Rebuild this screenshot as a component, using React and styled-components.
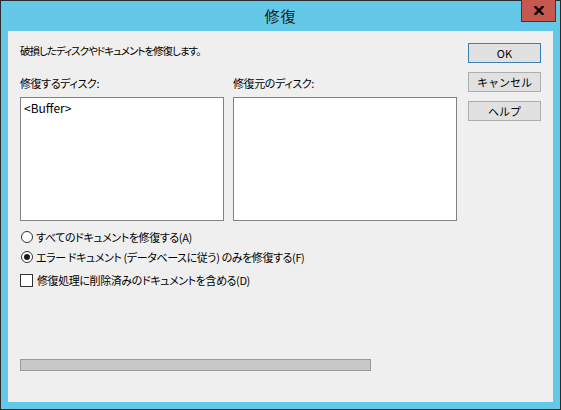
import styled, { createGlobalStyle } from "styled-components";

const GlobalStyle = createGlobalStyle`
  html, body {
    margin: 0;
    padding: 0;
    background: #ffffff;
  }
  * {
    box-sizing: border-box;
  }
`;

const fontStack = `"Segoe UI", "Noto Sans CJK JP", "Noto Sans", sans-serif`;

const App = () => {
  return (
    <Window>
      <GlobalStyle />
      <TitleBar>
        <span />
        <Title>修復</Title>
        <CloseButton aria-label="閉じる">
          <svg width="10" height="9" viewBox="0 0 10 9">
            <path d="M1.5 1 L8.5 8 M8.5 1 L1.5 8" stroke="#000" strokeWidth="2.4" strokeLinecap="square" />
          </svg>
        </CloseButton>
      </TitleBar>
      <Client>
        <TopRow>
          <MainColumn>
            <Intro>破損したディスクやドキュメントを修復します。</Intro>
            <ListGrid>
              <Label>修復するディスク:</Label>
              <Label>修復元のディスク:</Label>
              <ListBox>
                <ListItem>&lt;Buffer&gt;</ListItem>
              </ListBox>
              <ListBox />
            </ListGrid>
            <Options>
              <OptionRow>
                <Radio />
                <OptionText>すべてのドキュメントを修復する(A)</OptionText>
              </OptionRow>
              <OptionRow $gap={4}>
                <Radio $checked />
                <OptionText>エラー ドキュメント (データベースに従う) のみを修復する(F)</OptionText>
              </OptionRow>
              <OptionRow $gap={7}>
                <CheckBox />
                <OptionText>修復処理に削除済みのドキュメントを含める(D)</OptionText>
              </OptionRow>
            </Options>
          </MainColumn>
          <ButtonColumn>
            <Button $default>OK</Button>
            <Button>キャンセル</Button>
            <Button>ヘルプ</Button>
          </ButtonColumn>
        </TopRow>
        <Progress />
      </Client>
    </Window>
  );
};

export default App;

const Window = styled.div`
  width: 561px;
  height: 410px;
  border: 1px solid #2b2b2b;
  background: #64c8e8;
  display: flex;
  flex-direction: column;
  font-family: ${fontStack};
  font-feature-settings: "palt";
  color: #000;
`;

const TitleBar = styled.div`
  height: 30px;
  display: grid;
  grid-template-columns: 1fr auto 1fr;
  align-items: start;
`;

const Title = styled.div`
  font-size: 15px;
  line-height: 30px;
  color: #1a1a1a;
  letter-spacing: 1px;
`;

const CloseButton = styled.div`
  justify-self: end;
  margin-top: -1px;
  margin-right: 4px;
  width: 35px;
  height: 22px;
  background: #c75850;
  border: 1px solid #48332f;
  border-top: none;
  display: flex;
  align-items: center;
  justify-content: center;
  padding-bottom: 1px;
`;

const Client = styled.div`
  flex: 1;
  margin: 0 7px 7px;
  background: #efefef;
  padding: 12px 12px 31px;
  display: flex;
  flex-direction: column;
`;

const TopRow = styled.div`
  display: flex;
  gap: 11px;
`;

const MainColumn = styled.div`
  width: 437px;
  display: flex;
  flex-direction: column;
`;

const Intro = styled.div`
  font-size: 10.5px;
  line-height: 16px;
  letter-spacing: -1px;
`;

const ListGrid = styled.div`
  margin-top: 16px;
  display: grid;
  grid-template-columns: 204px 224px;
  column-gap: 9px;
  row-gap: 6px;
`;

const Label = styled.div`
  font-size: 11px;
  line-height: 16px;
  letter-spacing: -0.4px;
`;

const ListBox = styled.div`
  height: 124px;
  background: #ffffff;
  border: 1px solid #828282;
  padding: 3px 3px;
`;

const ListItem = styled.div`
  font-size: 12px;
  line-height: 14px;
`;

const Options = styled.div`
  margin-top: 8px;
  display: flex;
  flex-direction: column;
`;

const OptionRow = styled.div`
  display: flex;
  align-items: center;
  gap: 3px;
  height: 16px;
  margin-top: ${({ $gap }) => ($gap ? `${$gap}px` : "0")};
`;

const OptionText = styled.span`
  font-size: 11px;
  line-height: 16px;
  letter-spacing: -0.4px;
  white-space: nowrap;
`;

const Radio = styled.span`
  width: 12px;
  height: 12px;
  margin-left: 1px;
  border-radius: 50%;
  border: 1px solid #333333;
  background: #ffffff;
  display: flex;
  align-items: center;
  justify-content: center;
  &::after {
    content: "";
    width: 6px;
    height: 6px;
    border-radius: 50%;
    background: ${({ $checked }) => ($checked ? "#1a1a1a" : "transparent")};
  }
`;

const CheckBox = styled.span`
  width: 13px;
  height: 13px;
  border: 1px solid #333333;
  background: #ffffff;
  margin-right: 1px;
`;

const ButtonColumn = styled.div`
  display: flex;
  flex-direction: column;
  gap: 9px;
`;

const Button = styled.button`
  width: 73px;
  height: 20px;
  padding: 0;
  font-family: inherit;
  font-size: 11px;
  color: #000;
  background: #e1e1e1;
  border: 1px solid ${({ $default }) => ($default ? "#3c7fb1" : "#adadad")};
`;

const Progress = styled.div`
  margin-top: auto;
  width: 351px;
  height: 12px;
  background: #c8c8c8;
  border: 1px solid #999999;
`;
